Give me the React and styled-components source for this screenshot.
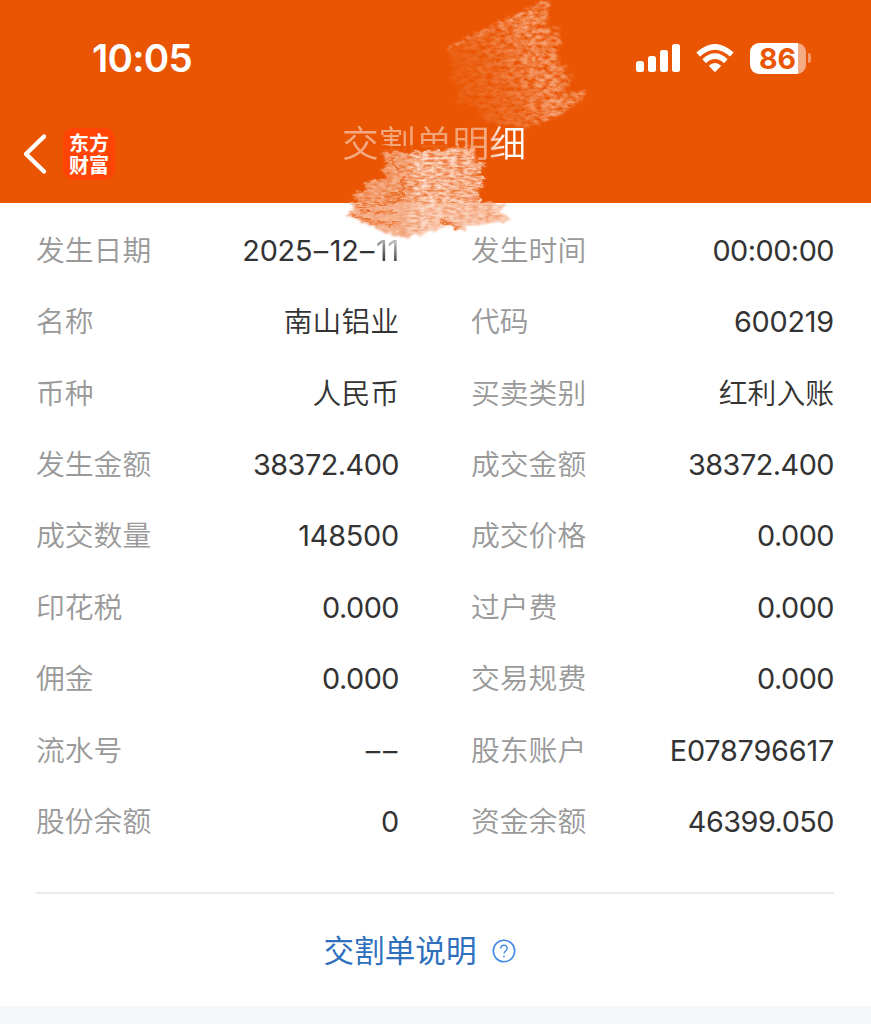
import React from "react";
import styled, { createGlobalStyle } from "styled-components";

const GlobalStyle = createGlobalStyle`
  * {
    box-sizing: border-box;
  }
  body {
    margin: 0;
    background: #fff;
    font-family: Inter, "Noto Sans CJK SC", sans-serif;
  }
`;

const Page = styled.div`
  position: relative;
  width: 871px;
  height: 1024px;
  overflow: hidden;
  display: flex;
  flex-direction: column;
  background: #fff;
`;

const Header = styled.header`
  height: 203px;
  flex: none;
  background: #ea5504;
  color: #fff;
`;

const StatusBar = styled.div`
  height: 116px;
  padding: 0 60px 0 92px;
  display: flex;
  align-items: center;
  justify-content: space-between;
`;

const Clock = styled.div`
  font-size: 38.5px;
  font-weight: 600;
  line-height: 46px;
  letter-spacing: -0.7px;
`;

const StatusIcons = styled.div`
  display: flex;
  align-items: center;
  gap: 15px;
`;

const Battery = styled.div`
  display: flex;
  align-items: center;
  gap: 2px;
`;

const BatteryBody = styled.div`
  width: 56px;
  height: 31px;
  padding-right: 1px;
  border-radius: 9px;
  display: flex;
  align-items: center;
  justify-content: center;
  background: linear-gradient(90deg, #fff 48px, #f5ab83 48px);
  color: #ea5504;
  font-size: 28.5px;
  font-weight: 700;
  line-height: 31px;
`;

const BatteryTip = styled.div`
  width: 3px;
  height: 10px;
  border-radius: 0 3px 3px 0;
  background: #f29a69;
`;

const NavBar = styled.div`
  height: 76px;
  padding: 0 24px;
  display: grid;
  grid-template-columns: 1fr auto 1fr;
  align-items: center;
`;

const NavLeft = styled.div`
  display: flex;
  align-items: center;
  gap: 17px;
`;

const Logo = styled.div`
  width: 52px;
  height: 52px;
  padding: 4px 4px 4px 6px;
  border-radius: 11px;
  background: #ff4405;
  font-family: "Noto Sans CJK SC", sans-serif;
  font-size: 20px;
  font-weight: 700;
  line-height: 22px;
  word-break: break-all;
`;

const Title = styled.h1`
  margin: 0;
  padding: 0 3px 20px 0;
  font-size: 36.8px;
  font-weight: 350;
  line-height: 50px;
  mask-image: linear-gradient(
    90deg,
    rgba(0, 0, 0, 0.5) 0,
    rgba(0, 0, 0, 0.45) 140px,
    #000 165px
  );
`;

const Details = styled.dl`
  margin: 0;
  padding: 12.2px 37px 0 36px;
  height: 689px;
  display: grid;
  grid-template-columns: 1fr 1fr;
  grid-auto-rows: 71.4px;
  column-gap: 72px;
`;

const Field = styled.div`
  display: flex;
  align-items: center;
  justify-content: space-between;
`;

const Label = styled.dt`
  color: #999;
  font-size: 28.8px;
  font-weight: 350;
  line-height: 40px;
`;

const Value = styled.dd`
  margin: 0;
  color: #333;
  font-size: 28.8px;
  font-weight: 350;
  line-height: 40px;
  white-space: nowrap;
`;

const NumericValue = styled(Value)`
  font-weight: 380;
  letter-spacing: ${props => (props.$tight ? "-0.5px" : "-0.2px")};
`;

const Dash = styled.span`
  margin-left: 1.5px;
  letter-spacing: 1.5px;
`;

const Faded = styled.span`
  background: linear-gradient(200deg, #bbb 25%, #444 70%);
  background-clip: text;
  color: transparent;
`;

const Divider = styled.hr`
  margin: 0 37px 0 36px;
  border: 0;
  height: 2px;
  flex: none;
  background: #e9eaeb;
`;

const HelpLink = styled.a`
  flex: 1;
  padding: 1px 31px 0 0;
  display: flex;
  align-items: center;
  justify-content: center;
  gap: 16px;
  color: #2f70bd;
  font-size: 30.6px;
  line-height: 44px;
`;

const Footer = styled.footer`
  height: 18px;
  flex: none;
  background: #f4f7f9;
`;

const Scribbles = styled.svg`
  position: absolute;
  top: 0;
  left: 330px;
  pointer-events: none;
`;

const fields = [
  ["发生日期", "2025–12–11"],
  ["发生时间", "00:00:00"],
  ["名称", "南山铝业"],
  ["代码", "600219"],
  ["币种", "人民币"],
  ["买卖类别", "红利入账"],
  ["发生金额", "38372.400"],
  ["成交金额", "38372.400"],
  ["成交数量", "148500"],
  ["成交价格", "0.000"],
  ["印花税", "0.000"],
  ["过户费", "0.000"],
  ["佣金", "0.000"],
  ["交易规费", "0.000"],
  ["流水号", "––"],
  ["股东账户", "E078796617"],
  ["股份余额", "0"],
  ["资金余额", "46399.050"]
];

const SignalIcon = () => (
  <svg width="44" height="28" viewBox="0 0 44 28" fill="#fff">
    <rect x="0" y="17" width="8" height="11" rx="2.5" />
    <rect x="12" y="12" width="8" height="16" rx="2.5" />
    <rect x="24" y="6" width="8" height="22" rx="2.5" />
    <rect x="36" y="0" width="8" height="28" rx="2.5" />
  </svg>
);

const WifiIcon = () => (
  <svg width="40" height="28" viewBox="0 0 40 28">
    <g fill="none" stroke="#fff" strokeWidth="5.4">
      <path d="M3.2 10.6 Q20 -5 36.8 10.6" />
      <path d="M9.2 17.2 Q20 7.2 30.8 17.2" />
    </g>
    <path
      d="M13.8 21.8 Q20 16.4 26.2 21.8 L21 27.2 Q20 28.2 19 27.2 Z"
      fill="#fff"
    />
  </svg>
);

const BackIcon = () => (
  <svg width="22" height="40" viewBox="0 0 22 40">
    <path
      d="M20 2.5 L2 20 L20 37.5"
      fill="none"
      stroke="#fff"
      strokeWidth="4.4"
      strokeLinecap="round"
      strokeLinejoin="round"
    />
  </svg>
);

const HelpIcon = () => (
  <svg width="24" height="24" viewBox="0 0 24 24" fill="none" stroke="#4189e8">
    <circle cx="12" cy="12" r="10.7" strokeWidth="1.6" />
    <path
      d="M8.8 9.6 C8.8 5.2 15.2 5.2 15.2 9.3 C15.2 11.7 12 11.7 12 14.6"
      strokeWidth="1.4"
    />
    <circle cx="12" cy="17.4" r="0.9" fill="#4189e8" stroke="none" />
  </svg>
);

const lowerShape =
  "M380 153 L415 152 L470 146 L477 153 L472 160 L487 163 L478 172 L485 181 L478 190 L480 201 L508 205 L497 211 L511 219 L485 224 L462 224 L467 231 L448 226 L425 232 L418 236 L408 234 L412 239 L390 234 L386 231 L388 235 L372 226 L347 215 L354 209 L351 204 L357 200 L352 194 L366 189 L364 182 L388 178 L381 170 L388 163 Z";

const CrayonScribbles = () => (
  <Scribbles width="270" height="270" viewBox="330 0 270 270">
    <defs>
      <filter id="grain" x="-5%" y="-5%" width="110%" height="110%" colorInterpolationFilters="sRGB">
        <feTurbulence type="fractalNoise" baseFrequency="0.3" numOctaves="2" seed="4" result="edge" />
        <feTurbulence type="fractalNoise" baseFrequency="0.14 0.24" numOctaves="5" seed="21" result="noise" />
        <feDisplacementMap in="SourceGraphic" in2="edge" scale="8" xChannelSelector="R" yChannelSelector="G" result="rough" />
        <feGaussianBlur in="rough" stdDeviation="0.9" result="soft" />
        <feColorMatrix in="noise" values="0 0 0 0 1  0 0 0 0 1  0 0 0 0 1  1.7 1.4 0 0 -1" result="holes" />
        <feComposite in="soft" in2="holes" operator="in" />
        <feGaussianBlur stdDeviation="0.5" />
      </filter>
      <filter id="base" x="-5%" y="-5%" width="110%" height="110%" colorInterpolationFilters="sRGB">
        <feTurbulence type="fractalNoise" baseFrequency="0.15 0.35" numOctaves="2" seed="9" result="edge" />
        <feDisplacementMap in="SourceGraphic" in2="edge" scale="9" xChannelSelector="R" yChannelSelector="G" />
        <feGaussianBlur stdDeviation="0.8" />
      </filter>
      <filter id="strokes" x="-5%" y="-5%" width="110%" height="110%" colorInterpolationFilters="sRGB">
        <feTurbulence type="fractalNoise" baseFrequency="0.15 0.35" numOctaves="2" seed="9" result="edge" />
        <feTurbulence type="fractalNoise" baseFrequency="0.14 0.4" numOctaves="4" seed="33" result="noise" />
        <feDisplacementMap in="SourceGraphic" in2="edge" scale="9" xChannelSelector="R" yChannelSelector="G" result="rough" />
        <feGaussianBlur in="rough" stdDeviation="0.7" result="soft" />
        <feColorMatrix in="noise" values="0 0 0 0 1  0 0 0 0 1  0 0 0 0 1  1.8 1.4 0 0 -1.05" result="holes" />
        <feComposite in="soft" in2="holes" operator="in" />
        <feGaussianBlur stdDeviation="0.5" />
      </filter>
      <linearGradient id="upper" gradientUnits="userSpaceOnUse" x1="450" y1="90" x2="560" y2="55">
        <stop offset="0" stopColor="#f5a273" stopOpacity="0.15" />
        <stop offset="0.45" stopColor="#f5a273" stopOpacity="0.45" />
        <stop offset="0.8" stopColor="#f7ac82" stopOpacity="0.95" />
        <stop offset="1" stopColor="#f5a273" stopOpacity="0.85" />
      </linearGradient>
      <linearGradient id="lower" gradientUnits="userSpaceOnUse" x1="350" y1="0" x2="510" y2="0">
        <stop offset="0" stopColor="#f9c3a5" stopOpacity="0.7" />
        <stop offset="0.33" stopColor="#f9c3a5" stopOpacity="0.75" />
        <stop offset="0.43" stopColor="#fddfcf" />
        <stop offset="0.75" stopColor="#fcd0b9" />
        <stop offset="1" stopColor="#fcd6c2" />
      </linearGradient>
    </defs>

    {/* the eraser bites out of the lower half of the title */}
    <path
      d="M378 160 L381 144 L396 147 L420 144 L452 144 L470 151 L474 160 Z"
      fill="#ea5504"
      opacity="0.85"
    />

    <g filter="url(#grain)">
      <path
        d="M446 51 L490 28 L520 13 L546 0 L551 4 L547 12 L549 20 L545 27 L560 28 L558 34 L562 40 L555 52 L560 58 L554 64 L568 66 L564 72 L573 75 L570 82 L564 92 L586 91 L585 98 L570 105 L562 114 L540 122 L525 128 L505 127 L480 118 L478 105 L455 102 L460 88 L449 80 L454 64 Z"
        fill="url(#upper)"
      />
      <path d="M448 49 L490 28 L548 1" stroke="#f6a97f" strokeWidth="4" fill="none" opacity="0.8" />
      <path d="M532 124 L562 112 L584 95" stroke="#f6a97f" strokeWidth="4" fill="none" opacity="0.8" />
    </g>

    {/* orange smeared below the header edge, the pale strokes go over it */}
    <path d={lowerShape} fill="#f08a53" opacity="0.8" filter="url(#base)" />
    <g filter="url(#strokes)">
      <path d={lowerShape} fill="url(#lower)" />
      <g fill="none" stroke="#ec6a22" strokeWidth="3">
        <path d="M356 207 L386 204 L404 198" />
        <path d="M350 214 L372 222 L400 224" />
        <path d="M360 211 L398 213" />
        <path d="M384 198 L400 192" />
        <path d="M404 176 L402 200" />
        <path d="M390 157 L400 172" />
        <path d="M440 221 L460 228" />
      </g>
    </g>
  </Scribbles>
);

const FieldValue = ({ text }) => {
  if (!/^[\dE]|–/.test(text)) {
    return <Value>{text}</Value>;
  }

  const parts = text.split(/(–)/).filter(Boolean);

  return (
    <NumericValue $tight={/[.:]/.test(text)}>
      {parts.map((part, i) => {
        if (part === "–") {
          return <Dash key={i}>{part}</Dash>;
        }
        // the last two digits of the date are half rubbed out
        return i === 4 ? <Faded key={i}>{part}</Faded> : part;
      })}
    </NumericValue>
  );
};

export default function App() {
  return (
    <>
      <GlobalStyle />
      <Page>
        <Header>
          <StatusBar>
            <Clock>10:05</Clock>
            <StatusIcons>
              <SignalIcon />
              <WifiIcon />
              <Battery>
                <BatteryBody>86</BatteryBody>
                <BatteryTip />
              </Battery>
            </StatusIcons>
          </StatusBar>
          <NavBar>
            <NavLeft>
              <BackIcon />
              <Logo>东方财富</Logo>
            </NavLeft>
            <Title>交割单明细</Title>
          </NavBar>
        </Header>
        <Details>
          {fields.map(([label, text]) => (
            <Field key={label}>
              <Label>{label}</Label>
              <FieldValue text={text} />
            </Field>
          ))}
        </Details>
        <Divider />
        <HelpLink>
          交割单说明
          <HelpIcon />
        </HelpLink>
        <Footer />
        <CrayonScribbles />
      </Page>
    </>
  );
}
